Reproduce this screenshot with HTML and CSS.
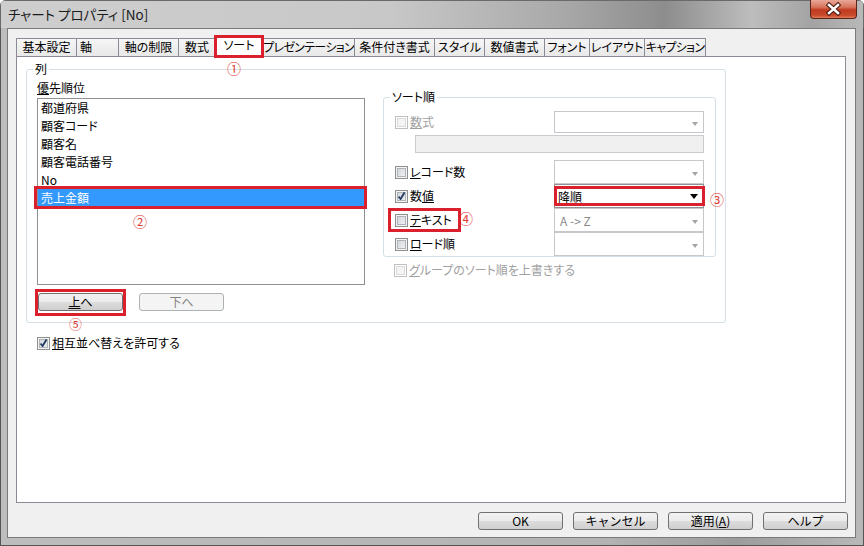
FILE: index.html
```html
<!DOCTYPE html>
<html>
    <head>
        <title>チャート プロパティ</title>
        <link rel="stylesheet" href="styles.css">
    </head>
    <body>
        <div class="window">
            <div class="titlebar">
                <span class="title">チャート プロパティ [No]</span>
                <div class="close-btn">
                    <svg width="47" height="19" viewBox="0 0 47 19">
                        <path d="M19 5 L28 13 M28 5 L19 13" stroke="#4a1a12" stroke-width="4.5" stroke-linecap="square"/>
                        <path d="M19 5 L28 13 M28 5 L19 13" stroke="#fff" stroke-width="2.5" stroke-linecap="square"/>
                    </svg>
                </div>
            </div>
            <div class="client">
                <div class="tabs">
                    <div class="tab w60">基本設定</div>
                    <div class="tab w42 left-text">軸</div>
                    <div class="tab w60">軸の制限</div>
                    <div class="tab w37">数式</div>
                    <div class="tab w48 active mark mark-tab">ソート</div>
                    <div class="tab w91 tight">プレゼンテーション</div>
                    <div class="tab w80">条件付き書式</div>
                    <div class="tab w50">スタイル</div>
                    <div class="tab w60">数値書式</div>
                    <div class="tab w45">フォント</div>
                    <div class="tab w55">レイアウト</div>
                    <div class="tab w62 tight last">キャプション</div>
                </div>
                <div class="panel">
                    <fieldset class="group col-group">
                        <legend>列</legend>
                        <div class="col-body">
                            <div class="left-col">
                                <div class="field-label"><u>優</u>先順位</div>
                                <div class="listbox">
                                    <div class="item">都道府県</div>
                                    <div class="item">顧客コード</div>
                                    <div class="item">顧客名</div>
                                    <div class="item">顧客電話番号</div>
                                    <div class="item">No</div>
                                    <div class="item sel mark mark-item">売上金額</div>
                                </div>
                                <div class="move-btns">
                                    <button class="btn mark mark-up"><u>上</u>へ</button>
                                    <button class="btn" disabled>下へ</button>
                                </div>
                            </div>
                            <div class="right-col">
                                <fieldset class="group sort-group">
                                    <legend>ソート順</legend>
                                    <div class="sort-row first">
                                        <label class="check off"><span class="cb"></span><span><u>数</u>式</span></label>
                                        <div class="combo short"><span></span><span class="arrow"></span></div>
                                    </div>
                                    <div class="formula-box"></div>
                                    <div class="sort-rows">
                                        <div class="sort-row">
                                            <label class="check"><span class="cb"></span><span><u>レ</u>コード数</span></label>
                                            <div class="combo"><span></span><span class="arrow"></span></div>
                                        </div>
                                        <div class="sort-row">
                                            <label class="check"><span class="cb on"></span><span>数<u>値</u></span></label>
                                            <div class="combo active mark mark-combo"><span>降順</span><span class="arrow dark"></span></div>
                                        </div>
                                        <div class="sort-row">
                                            <label class="check mark mark-text"><span class="cb"></span><span><u>テ</u>キスト</span></label>
                                            <div class="combo"><span class="dim">A -&gt; Z</span><span class="arrow"></span></div>
                                        </div>
                                        <div class="sort-row">
                                            <label class="check"><span class="cb"></span><span><u>ロ</u>ード順</span></label>
                                            <div class="combo"><span></span><span class="arrow"></span></div>
                                        </div>
                                    </div>
                                </fieldset>
                                <label class="check off override"><span class="cb"></span><span><u>グ</u>ループのソート順を上書きする</span></label>
                            </div>
                        </div>
                    </fieldset>
                    <label class="check mutual"><span class="cb on"></span><span><u>相</u>互並べ替えを許可する</span></label>

                    <span class="anno n1">①</span>
                    <span class="anno n2">②</span>
                    <span class="anno n3">③</span>
                    <span class="anno n4">④</span>
                    <span class="anno n5">⑤</span>
                </div>
                <div class="footer">
                    <button class="btn">OK</button>
                    <button class="btn">キャンセル</button>
                    <button class="btn">適用(<u>A</u>)</button>
                    <button class="btn">ヘルプ</button>
                </div>
            </div>
        </div>
    </body>
</html>
```

FILE: styles.css
```css
body {
    margin: 0;
    font-family: "Noto Sans CJK JP", "Noto Sans", sans-serif;
    font-size: 12px;
    font-feature-settings: "palt";
    color: #000;
}
u {
    text-underline-offset: 1px;
}
.window {
    width: 864px;
    height: 546px;
    box-sizing: border-box;
    background: linear-gradient(to right, #bdbdbd, #b3b3b3 70%, #9c9c9c 85%, #b8b8b8);
    box-shadow: inset 0 0 0 1px #555;
    border-radius: 6px 6px 0 0;
    overflow: hidden;
}
.titlebar {
    height: 28px;
    display: flex;
    align-items: flex-start;
    background: linear-gradient(to right, #cecece 0%, #c8c8c8 45%, #a9a9a9 65%, #8d8d8d 77%, #bdbdbd 87%, #a3a3a3 94%, #b9b9b9 100%);
    box-shadow: inset 0 1px 0 #6a6a6a, inset 1px 0 0 #6a6a6a, inset -1px 0 0 #6a6a6a;
}
.title {
    margin: 6px 0 0 8px;
    font-size: 13.5px;
    line-height: 16px;
    color: #1b1b1b;
}
.close-btn {
    margin-left: auto;
    margin-right: 7px;
    width: 47px;
    height: 19px;
    box-sizing: border-box;
    border: 1px solid #5b2418;
    border-top: none;
    border-radius: 0 0 4px 4px;
    background: linear-gradient(#e9a897 0%, #d7735c 40%, #c0391f 55%, #c94a2d 85%, #e27a5a 100%);
}
.close-btn svg {
    display: block;
    margin-left: -1px;
}

.client {
    margin: 0 8px 0 7px;
    height: 510px;
    box-sizing: border-box;
    border: 1px solid #7a7a7a;
    background: #f0f0f0;
}
.tabs {
    display: flex;
    align-items: flex-end;
    height: 27px;
    padding-left: 8px;
}
.tab {
    height: 18px;
    box-sizing: border-box;
    border: 1px solid #898c95;
    border-bottom: none;
    border-right: none;
    background: linear-gradient(#f6f6f6, #e8e8e8);
    line-height: 16px;
    text-align: center;
    white-space: nowrap;
    overflow: hidden;
}
.tab.tight {
    letter-spacing: -0.7px;
}
.tab.left-text {
    text-align: left;
    padding-left: 3px;
}
.tab.last {
    border-right: 1px solid #898c95;
}
.tab.active {
    height: 22px;
    background: #fff;
    border-right: 1px solid #898c95;
    margin-bottom: -1px;
    line-height: 18px;
    overflow: visible;
    z-index: 1;
}
.tab.active + .tab {
    border-left: none;
}
.w37 { width: 37px; }
.w42 { width: 42px; }
.w45 { width: 45px; }
.w48 { width: 48px; }
.w50 { width: 50px; }
.w55 { width: 55px; }
.w60 { width: 60px; }
.w62 { width: 62px; }
.w80 { width: 80px; }
.w91 { width: 91px; }

.panel {
    position: relative;
    margin-left: 8px;
    width: 830px;
    height: 447px;
    box-sizing: border-box;
    border: 1px solid #898c95;
    background: #fff;
}
.group {
    margin: 0;
    padding: 0;
    min-width: 0;
    box-sizing: border-box;
    border: 1px solid #d5dfe5;
    border-radius: 3px;
}
.group legend {
    margin-left: 6px;
    padding: 0 2px;
    line-height: 14px;
}
.col-group {
    margin: 5px 0 0 9px;
    width: 700px;
}
.col-body {
    display: flex;
    align-items: flex-start;
    padding: 0 0 11px 10px;
}
.left-col {
    width: 328px;
    padding-top: 5px;
}
.field-label {
    line-height: 14px;
}
.listbox {
    margin-top: 3px;
    height: 187px;
    box-sizing: border-box;
    border: 1px solid #8f9094;
}
.item {
    height: 18px;
    line-height: 18px;
    padding-left: 3px;
}
.item.sel {
    background: #3399ff;
    color: #fff;
}
.move-btns {
    display: flex;
    gap: 16px;
    margin-top: 8px;
    padding-left: 1px;
}

.btn {
    width: 85px;
    height: 18px;
    padding: 0;
    box-sizing: border-box;
    border: 1px solid #707070;
    border-radius: 3px;
    background: linear-gradient(#f2f2f2 0%, #ebebeb 50%, #dddddd 50%, #cfcfcf 100%);
    font-family: inherit;
    font-size: 12px;
    line-height: 14px;
    color: #000;
}
.btn:disabled {
    border-color: #adb2b5;
    background: #f4f4f4;
    color: #838383;
}

.right-col {
    margin: 14px 0 0 18px;
}
.sort-group {
    width: 333px;
}
.sort-row {
    display: flex;
    align-items: center;
    justify-content: space-between;
    height: 24px;
    padding: 0 11px;
}
.sort-row.first {
    margin-top: 7px;
    height: 22px;
}
.formula-box {
    margin: 2px 11px 0 31px;
    height: 18px;
    box-sizing: border-box;
    border: 1px solid #c9cbcf;
    background: #f0f0f0;
}
.sort-rows {
    margin-top: 7px;
}
.combo {
    width: 150px;
    height: 24px;
    box-sizing: border-box;
    border: 1px solid #c5c7cb;
    background: #fff;
    display: flex;
    align-items: center;
    justify-content: space-between;
    padding: 0 5px 0 5px;
}
.combo.short {
    height: 22px;
}
.combo.active {
    border-color: #8f9094;
    padding-left: 3px;
}
.combo .dim {
    color: #8a8a8a;
}
.arrow {
    width: 0;
    height: 0;
    margin-top: 3px;
    border-left: 3.5px solid transparent;
    border-right: 3.5px solid transparent;
    border-top: 4px solid #a5a5a5;
}
.arrow.dark {
    margin-top: 1px;
    border-left-width: 4px;
    border-right-width: 4px;
    border-top: 5px solid #000;
}

.check {
    display: flex;
    align-items: center;
    gap: 2px;
    line-height: 14px;
}
.check.off {
    color: #a0a0a0;
}
.cb {
    position: relative;
    width: 13px;
    height: 13px;
    box-sizing: border-box;
    border: 1px solid #8e8f8f;
    background: linear-gradient(135deg, #cdd1d6, #f5f5f5);
    box-shadow: inset 0 0 0 1px #f4f4f4, inset 0 0 0 2px #aeb3b9;
}
.check.off .cb {
    border-color: #c0c0c0;
    background: #f4f4f4;
    box-shadow: inset 0 0 0 1px #fff, inset 0 0 0 2px #dadada;
}
.cb.on::after {
    content: "";
    position: absolute;
    left: 2px;
    top: 1px;
    width: 7px;
    height: 8px;
    background: no-repeat center / 7px 8px url("data:image/svg+xml,%3Csvg xmlns='http://www.w3.org/2000/svg' width='7' height='8'%3E%3Cpath d='M0.5 4.5 L2.6 7 L6.5 0.5' fill='none' stroke='%23233b64' stroke-width='1.8'/%3E%3C/svg%3E");
}
.override {
    margin: 6px 0 0 11px;
}
.mutual {
    margin: 13px 0 0 20px;
    width: max-content;
}

.footer {
    display: flex;
    justify-content: flex-end;
    gap: 10px;
    margin-top: 9px;
    padding-right: 7px;
}

.anno {
    position: absolute;
    color: #e0403a;
    font-size: 14px;
    line-height: 14px;
}
.n1 { left: 210px; top: 4px; }
.n2 { left: 116px; top: 157px; }
.n3 { left: 693px; top: 135px; }
.n4 { left: 442px; top: 154px; }
.n5 { left: 52px; top: 260px; font-size: 13px; line-height: 13px; }

.mark {
    position: relative;
}
.mark::before {
    content: "";
    position: absolute;
    border: 3px solid #d9202c;
    z-index: 2;
}
.mark-tab::before { inset: -1px -2px -1px -2px; }
.mark-item::before { inset: -3px -3px -2px -4px; }
.mark-up::before { inset: -5px -4px -6px -4px; }
.mark-combo::before { inset: 1px -2px 1px -1px; }
.mark-text::before { inset: -5px -9px -5px -7px; }
```
